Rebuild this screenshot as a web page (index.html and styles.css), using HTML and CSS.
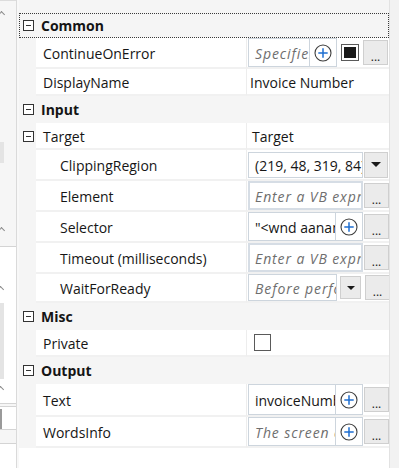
FILE: index.html
```html
<!DOCTYPE html>
<html lang="en">
<head>
    <meta charset="UTF-8">
    <title>Properties</title>
    <link rel="stylesheet" href="styles.css">
</head>
<body>
    <div class="window">
        <!-- neighbouring panel, mostly cut off -->
        <div class="side">
            <div class="side-head"></div>
            <div class="side-block" style="height: 142px;">
                <span class="chev chev-top"></span>
                <span class="bar bar-low"></span>
            </div>
            <div class="side-block" style="height: 103px;">
                <span class="chev chev-low"></span>
            </div>
            <div class="side-box" style="height: 158px;">
                <span class="chev"></span>
                <span class="bar bar-long"></span>
                <span class="chev"></span>
            </div>
            <div class="side-box small"><span class="bar bar-dark"></span></div>
            <div class="side-box last"></div>
        </div>
        <div class="spacer"></div>

        <div class="grid">
            <div class="toolbar"></div>

            <div class="category focused"><span class="toggle"></span>Common</div>
            <div class="row">
                <div class="gutter"></div>
                <div class="name">ContinueOnError</div>
                <div class="value">
                    <div class="editor short">
                        <span class="text hint">Specifies if the automation should continue</span>
                        <span class="plus"><svg width="18" height="18" viewBox="0 0 18 18"><circle cx="9" cy="9" r="8" fill="none" stroke="#3c3c3c" stroke-width="1.1"/><path d="M9 4.3v9.4M4.3 9h9.4" stroke="#1f6fd1" stroke-width="1.5"/></svg></span>
                    </div>
                    <span class="check mixed"></span>
                    <button class="more">...</button>
                </div>
            </div>
            <div class="row plain">
                <div class="gutter"></div>
                <div class="name">DisplayName</div>
                <div class="value"><span class="plain-text first">Invoice Number</span></div>
            </div>

            <div class="category"><span class="toggle"></span>Input</div>
            <div class="row plain">
                <div class="gutter"><span class="toggle"></span></div>
                <div class="name">Target</div>
                <div class="value"><span class="plain-text">Target</span></div>
            </div>
            <div class="row">
                <div class="gutter"></div>
                <div class="name sub">ClippingRegion</div>
                <div class="value">
                    <div class="editor combo"><span class="text">(219, 48, 319, 84)</span></div>
                    <button class="drop"><span class="arrow"></span></button>
                </div>
            </div>
            <div class="row">
                <div class="gutter"></div>
                <div class="name sub">Element</div>
                <div class="value">
                    <div class="editor boxed"><span class="text hint">Enter a VB expression</span></div>
                    <button class="more">...</button>
                </div>
            </div>
            <div class="row">
                <div class="gutter"></div>
                <div class="name sub">Selector</div>
                <div class="value">
                    <div class="editor">
                        <span class="text">"&lt;wnd aaname='Invoice' /&gt;"</span>
                        <span class="plus"><svg width="18" height="18" viewBox="0 0 18 18"><circle cx="9" cy="9" r="8" fill="none" stroke="#3c3c3c" stroke-width="1.1"/><path d="M9 4.3v9.4M4.3 9h9.4" stroke="#1f6fd1" stroke-width="1.5"/></svg></span>
                    </div>
                    <button class="more">...</button>
                </div>
            </div>
            <div class="row">
                <div class="gutter"></div>
                <div class="name sub">Timeout (milliseconds)</div>
                <div class="value">
                    <div class="editor boxed"><span class="text hint">Enter a VB expression</span></div>
                    <button class="more">...</button>
                </div>
            </div>
            <div class="row last">
                <div class="gutter"></div>
                <div class="name sub">WaitForReady</div>
                <div class="value">
                    <div class="editor short"><span class="text hint">Before performing the action</span></div>
                    <button class="drop small"><span class="arrow"></span></button>
                    <button class="more">...</button>
                </div>
            </div>

            <div class="category"><span class="toggle"></span>Misc</div>
            <div class="row plain">
                <div class="gutter"></div>
                <div class="name">Private</div>
                <div class="value"><span class="check"></span></div>
            </div>

            <div class="category"><span class="toggle"></span>Output</div>
            <div class="row tall">
                <div class="gutter"></div>
                <div class="name">Text</div>
                <div class="value">
                    <div class="editor">
                        <span class="text">invoiceNumber</span>
                        <span class="plus"><svg width="18" height="18" viewBox="0 0 18 18"><circle cx="9" cy="9" r="8" fill="none" stroke="#3c3c3c" stroke-width="1.1"/><path d="M9 4.3v9.4M4.3 9h9.4" stroke="#1f6fd1" stroke-width="1.5"/></svg></span>
                    </div>
                    <button class="more">...</button>
                </div>
            </div>
            <div class="row">
                <div class="gutter"></div>
                <div class="name">WordsInfo</div>
                <div class="value">
                    <div class="editor">
                        <span class="text hint">The screen coordinates of each word</span>
                        <span class="plus"><svg width="18" height="18" viewBox="0 0 18 18"><circle cx="9" cy="9" r="8" fill="none" stroke="#3c3c3c" stroke-width="1.1"/><path d="M9 4.3v9.4M4.3 9h9.4" stroke="#1f6fd1" stroke-width="1.5"/></svg></span>
                    </div>
                    <button class="more">...</button>
                </div>
            </div>
        </div>

        <div class="scroll"></div>
    </div>
</body>
</html>
```

FILE: styles.css
```css
* {
    box-sizing: border-box;
}

body {
    margin: 0;
    background: #ffffff;
    font-family: "Open Sans", "Noto Sans", sans-serif;
    font-size: 14px;
    color: #161616;
}

.window {
    display: flex;
    width: 399px;
    height: 468px;
    overflow: hidden;
}

/* left neighbour panel */
.side {
    width: 17px;
    flex-shrink: 0;
    display: flex;
    flex-direction: column;
    background: #f6f6f6;
    border-right: 1px solid #dadada;
}

.side-head {
    height: 13px;
    background: #ffffff;
    border-bottom: 1px solid #dcdcdc;
}

.side-block {
    position: relative;
    flex-shrink: 0;
}

.side-box {
    position: relative;
    flex-shrink: 0;
    background: #ffffff;
    border-top: 1px solid #d4d4d4;
    border-bottom: 1px solid #d4d4d4;
    display: flex;
    flex-direction: column;
    padding-top: 40px;
}

.side-box.small {
    height: 24px;
    margin-top: 2px;
    padding-top: 2px;
}

.side-box.last {
    margin-top: 13px;
    flex: 1;
    border-bottom: none;
}

.chev {
    display: block;
    width: 5px;
    height: 5px;
    margin-left: -2px;
    border-top: 1px solid #8a8a8a;
    border-right: 1px solid #8a8a8a;
    transform: rotate(-45deg);
}

.chev-top {
    position: absolute;
    top: 11px;
    left: 1px;
}

.chev-low {
    position: absolute;
    top: 85px;
    left: 1px;
}

.side-box .chev {
    margin-left: -2px;
    margin-bottom: 11px;
}

.bar {
    display: block;
    width: 4px;
    background: #e4e4e4;
}

.bar-low {
    position: absolute;
    top: 141px;
    left: 0;
    height: 21px;
}

.bar-long {
    height: 78px;
    margin-bottom: 8px;
}

.bar-dark {
    width: 2px;
    height: 20px;
    background: #9a9a9a;
}

.spacer {
    width: 2px;
    flex-shrink: 0;
    background: #f8f8f8;
}

/* property grid */
.grid {
    width: 370px;
    flex-shrink: 0;
    background: #ffffff;
}

.toolbar {
    height: 13px;
    background: #f5f5f5;
}

.category {
    display: flex;
    align-items: center;
    height: 27px;
    padding-left: 4px;
    background: #f5f5f5;
    font-weight: bold;
    color: #141414;
}

.category.focused {
    height: 25px;
    padding-left: 3px;
    border: 1px dotted #3a3a3a;
}

.toggle {
    width: 11px;
    height: 11px;
    margin-right: 7px;
    border: 1px solid #333333;
    background: #ffffff linear-gradient(#333333, #333333) no-repeat center / 5px 1px;
    flex-shrink: 0;
}

.row {
    display: flex;
    height: 31px;
    background: #f5f5f5;
}

.row.plain {
    height: 27px;
}

.row.last {
    height: 29px;
}

.row.tall {
    height: 33px;
}

.gutter {
    width: 17px;
    flex-shrink: 0;
    display: flex;
    align-items: center;
    padding-left: 4px;
}

.gutter .toggle {
    margin-right: 0;
}

.name {
    width: 210px;
    flex-shrink: 0;
    display: flex;
    align-items: center;
    padding-left: 7px;
    padding-top: 2px;
    background: #ffffff;
    border-bottom: 2px solid #f1f1f1;
    white-space: nowrap;
    overflow: hidden;
}

.name.sub {
    padding-left: 24px;
}

.value {
    flex: 1;
    display: flex;
    align-items: center;
    padding-left: 1px;
    background: #ffffff;
    border-left: 1px solid #ededed;
    border-bottom: 2px solid #f1f1f1;
    min-width: 0;
}

.plain-text {
    padding-left: 4px;
    padding-top: 2px;
}

.plain-text.first {
    padding-left: 2px;
}

.editor {
    display: flex;
    align-self: stretch;
    width: 115px;
    flex-shrink: 0;
    border: 1px solid #cdd5dd;
    background: #ffffff;
}

.editor.short {
    width: 89px;
}

.editor.boxed {
    border: 2px solid #d6dde5;
}

.editor.combo {
    align-self: center;
    height: 26px;
}

.text {
    flex: 1;
    min-width: 0;
    display: flex;
    align-items: center;
    padding-left: 6px;
    padding-top: 2px;
    white-space: nowrap;
    overflow: hidden;
}

.editor.boxed .text {
    padding-left: 5px;
}

.hint {
    font-style: italic;
    color: #6e6e6e;
    letter-spacing: 0.9px;
}

.plus {
    width: 27px;
    flex-shrink: 0;
    display: flex;
    align-items: center;
    justify-content: center;
    border-left: 1px solid #cdd5dd;
}

.plus svg {
    display: block;
}

.check {
    width: 17px;
    height: 17px;
    margin-left: 6px;
    border: 1px solid #5a5a5a;
    background: #ffffff;
}

.check.mixed {
    margin-left: 4px;
    width: 18px;
    padding: 2px;
    background: #1a1a1a content-box;
}

.more {
    width: 25px;
    height: 25px;
    margin-left: 4px;
    padding: 9px 0 0;
    border: 1px solid #cfcfcf;
    background: #ebebeb;
    font-family: "Open Sans", sans-serif;
    font-size: 12px;
    line-height: 12px;
    color: #1b1b1b;
    flex-shrink: 0;
}

.editor:not(.short) + .more {
    margin-left: 1px;
}

.drop {
    width: 24px;
    height: 26px;
    margin-left: 1px;
    padding: 0;
    border: 1px solid #cfcfcf;
    background: #ebebeb;
    display: flex;
    align-items: center;
    justify-content: center;
    flex-shrink: 0;
}

.drop.small {
    width: 21px;
    height: 23px;
    margin-left: 3px;
}

.arrow {
    width: 0;
    height: 0;
    border-left: 5px solid transparent;
    border-right: 5px solid transparent;
    border-top: 5px solid #1a1a1a;
}

.drop.small .arrow {
    border-left-width: 4px;
    border-right-width: 4px;
    border-top-width: 4px;
}

.scroll {
    flex: 1;
    background: #f2f2f2;
    border-left: 1px solid #e2e2e2;
}
```
